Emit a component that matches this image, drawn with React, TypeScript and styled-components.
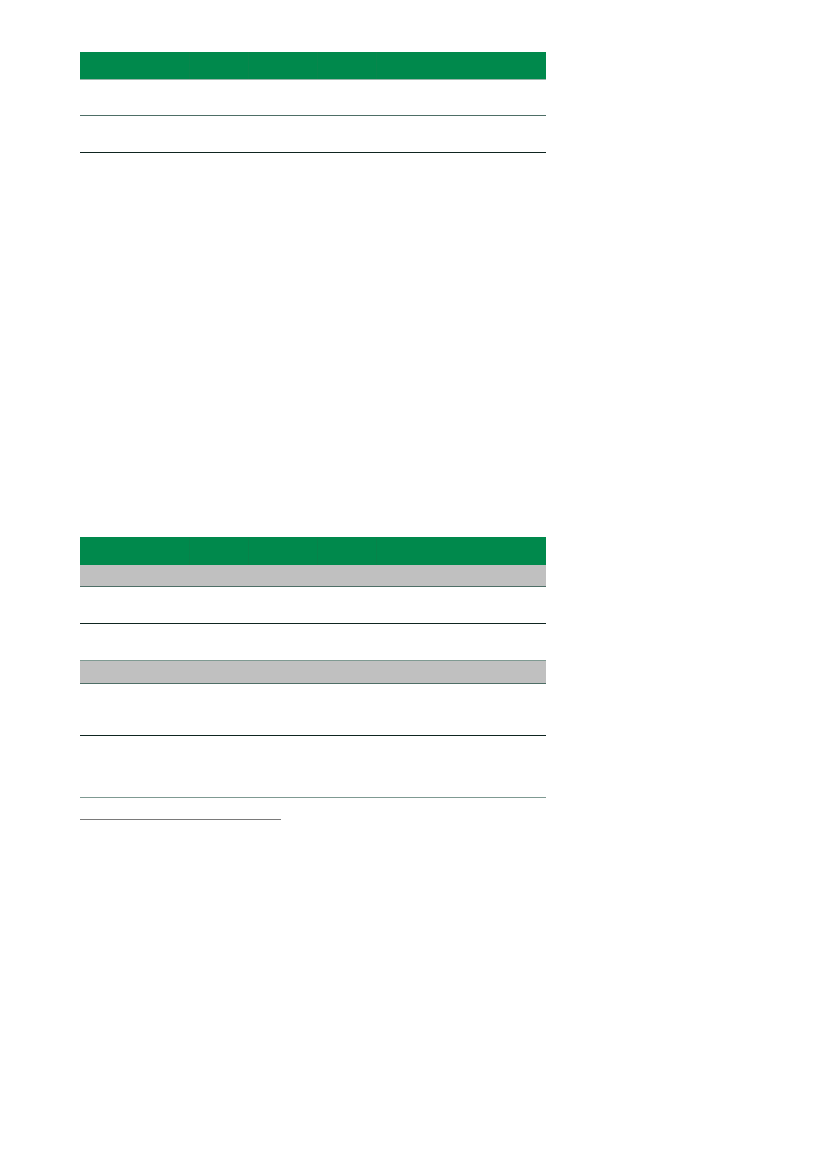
import React from "react";
import styled, { createGlobalStyle } from "styled-components";

const Global = createGlobalStyle`
  html, body { margin: 0; padding: 0; background: #ffffff; }
  body { font-family: "Liberation Sans", Arial, sans-serif; }
`;

const Page = styled.div`
  width: 827px;
  height: 1169px;
  box-sizing: border-box;
  padding: 52px 0 0 80px;
  display: flex;
  flex-direction: column;
  background: #fff;
`;

const Table = styled.div<{ $gapAfter?: number }>`
  width: 466px;
  display: flex;
  flex-direction: column;
  margin-bottom: ${(p) => p.$gapAfter ?? 0}px;
`;

type Kind = "head" | "band" | "body";

const Row = styled.div<{ $h: number; $kind: Kind; $line?: string }>`
  display: grid;
  grid-template-columns: 109px 59px 69px 59px 170px;
  height: ${(p) => p.$h}px;
  box-sizing: border-box;
  background: ${(p) =>
    p.$kind === "head" ? "#00894c" : p.$kind === "band" ? "#c0c0c0" : "#ffffff"};
  border-bottom: ${(p) => (p.$line ? `1px solid ${p.$line}` : "none")};
`;

const Cell = styled.div<{ $sep?: string }>`
  border-left: ${(p) => (p.$sep ? `1px solid ${p.$sep}` : "none")};
  &:first-child { border-left: none; }
`;

const Footnote = styled.div`
  width: 201px;
  height: 1px;
  background: #7a7a7a;
  margin-top: 21px;
`;

const cols = [0, 1, 2, 3, 4];

function TRow({ h, kind, line, sep }: { h: number; kind: Kind; line?: string; sep?: string }) {
  return (
    <Row $h={h} $kind={kind} $line={line}>
      {cols.map((c) => (
        <Cell key={c} $sep={sep} />
      ))}
    </Row>
  );
}

export default function App() {
  return (
    <>
      <Global />
      <Page>
        <Table $gapAfter={384}>
          <TRow h={28} kind="head" line="#9bb5aa" sep="#08864c" />
          <TRow h={36} kind="body" line="#4e6e66" />
          <TRow h={37} kind="body" line="#0f2520" />
        </Table>
        <Table>
          <TRow h={28} kind="head" sep="#07834a" />
          <TRow h={22} kind="band" line="#4e6e66" />
          <TRow h={37} kind="body" line="#0f2520" />
          <TRow h={37} kind="body" line="#7f9a92" />
          <TRow h={23} kind="band" line="#4e6e66" />
          <TRow h={52} kind="body" line="#0f2520" />
          <TRow h={62} kind="body" line="#7f9a92" />
        </Table>
        <Footnote />
      </Page>
    </>
  );
}
